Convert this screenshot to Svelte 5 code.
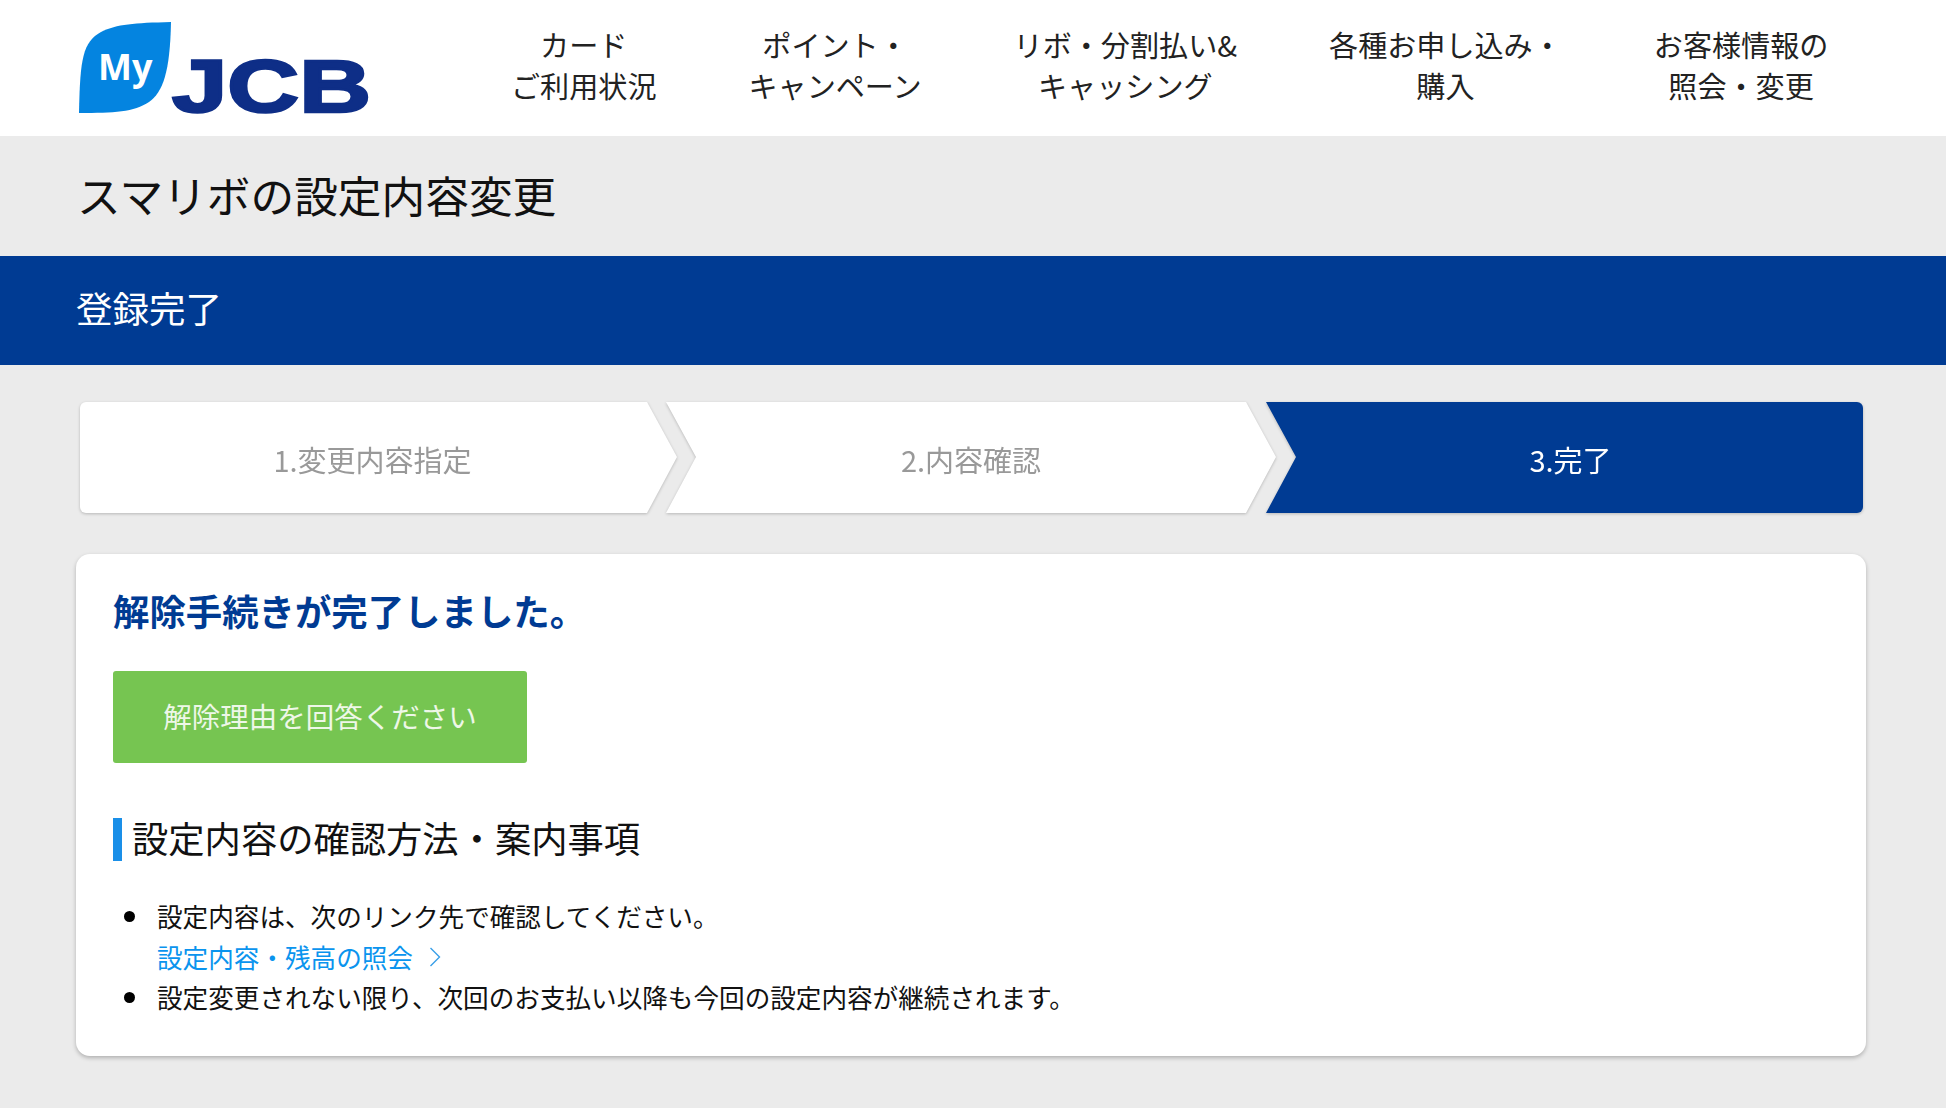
<script lang="ts">
  const navItems = [
    ["カード", "ご利用状況"],
    ["ポイント・", "キャンペーン"],
    ["リボ・分割払い&", "キャッシング"],
    ["各種お申し込み・", "購入"],
    ["お客様情報の", "照会・変更"],
  ];

  const steps = [
    { label: "1.変更内容指定", kind: "first" },
    { label: "2.内容確認", kind: "middle" },
    { label: "3.完了", kind: "last" },
  ];
</script>

<div class="page">
  <header class="header">
    <svg class="logo" width="300" height="112" viewBox="0 0 300 112" aria-label="MyJCB">
      <path
        d="M92 0 C55 1 38 2 22 10 C4 20 1 36 0 91 C35 91 55 90 70 80 C84 70 91 50 92 0 Z"
        fill="#0484e0"
      />
      <text x="19" y="58" class="logo-my">My</text>
      <text x="93" y="90" class="logo-jcb" textLength="199" lengthAdjust="spacingAndGlyphs">JCB</text>
    </svg>
    <nav class="nav">
      {#each navItems as lines}
        <a class="nav-item" href="#top">
          {#each lines as line}
            <span>{line}</span>
          {/each}
        </a>
      {/each}
    </nav>
  </header>

  <div class="title-band">
    <h1>スマリボの設定内容変更</h1>
  </div>

  <div class="status-band">登録完了</div>

  <ol class="steps">
    {#each steps as step}
      <li class="step {step.kind}">{step.label}</li>
    {/each}
  </ol>

  <main class="card">
    <h2 class="done">解除手続きが完了しました。</h2>
    <button class="survey" type="button">解除理由を回答ください</button>
    <h3 class="section">設定内容の確認方法・案内事項</h3>
    <ul class="notes">
      <li>
        <div>
          設定内容は、次のリンク先で確認してください。
          <a class="link" href="#top">
            設定内容・残高の照会
            <svg width="12" height="20" viewBox="0 0 12 20" aria-hidden="true">
              <path d="M1.5 1 L10.5 10 L1.5 19" fill="none" stroke="#3a9fe8" stroke-width="1.4" />
            </svg>
          </a>
        </div>
      </li>
      <li><div>設定変更されない限り、次回のお支払い以降も今回の設定内容が継続されます。</div></li>
    </ul>
  </main>
</div>

<style>
  :global(body) {
    margin: 0;
    background: #ebebeb;
  }

  .page {
    min-height: 1108px;
    background: #ebebeb;
    color: #000;
    font-family: "Noto Sans CJK JP", "Liberation Sans", sans-serif;
  }

  .header {
    display: flex;
    align-items: flex-start;
    height: 136px;
    padding-left: 79px;
    background: #fff;
    box-sizing: border-box;
  }

  .logo {
    flex: none;
    margin-top: 22px;
    width: 300px;
    height: 112px;
  }

  .logo-my {
    font-family: "Open Sans", "Liberation Sans", sans-serif;
    font-weight: 700;
    font-size: 36px;
    fill: #fff;
  }

  .logo-jcb {
    font-family: "Liberation Sans", sans-serif;
    font-weight: 700;
    font-size: 74px;
    fill: #0e2e87;
    stroke: #0e2e87;
    stroke-width: 2.5px;
  }

  .nav {
    display: flex;
    gap: 92px;
    margin-left: 132px;
    padding-top: 24px;
  }

  .nav-item {
    display: flex;
    flex-direction: column;
    align-items: center;
    font-size: 29.1px;
    line-height: 41px;
    color: #222;
    text-decoration: none;
    white-space: nowrap;
  }

  .title-band {
    height: 120px;
    padding-left: 77px;
    padding-bottom: 5px;
    box-sizing: border-box;
    display: flex;
    align-items: center;
  }

  h1 {
    margin: 0;
    font-size: 43.7px;
    font-weight: 400;
    color: #111;
  }

  .status-band {
    display: flex;
    align-items: center;
    box-sizing: border-box;
    height: 109px;
    padding-left: 76px;
    padding-bottom: 6px;
    background: #003b93;
    color: #fff;
    font-size: 36.5px;
  }

  .steps {
    display: flex;
    list-style: none;
    margin: 37px 0 0 80px;
    padding: 0;
    width: 1783px;
    filter: drop-shadow(0 1.5px 1.5px rgba(0, 0, 0, 0.22));
  }

  .step {
    display: flex;
    align-items: center;
    justify-content: center;
    box-sizing: border-box;
    height: 111px;
    padding-top: 2px;
    font-size: 29px;
    background: #fff;
    color: #999;
  }

  .step.first {
    width: 597px;
    padding-right: 12px;
    border-radius: 6px 0 0 6px;
    clip-path: polygon(0 0, 567px 0, 597px 55px, 567px 111px, 0 111px);
  }

  .step.middle {
    width: 610px;
    margin-left: -11px;
    clip-path: polygon(0 0, 580px 0, 610px 55px, 580px 111px, 0 111px, 30px 55px);
  }

  .step.last {
    width: 597px;
    margin-left: -10px;
    padding-left: 12px;
    background: #003b93;
    color: #fff;
    border-radius: 0 6px 6px 0;
    clip-path: polygon(0 0, 100% 0, 100% 100%, 0 100%, 30px 55px);
  }

  .card {
    margin: 41px 80px 0 76px;
    height: 502px;
    box-sizing: border-box;
    padding: 29px 37px 0;
    background: #fff;
    border-radius: 14px;
    box-shadow: 0 2px 4px rgba(0, 0, 0, 0.25);
  }

  .done {
    margin: 0;
    font-size: 36.4px;
    line-height: 54px;
    font-weight: 700;
    color: #003b93;
  }

  .survey {
    display: block;
    width: 414px;
    height: 92px;
    margin-top: 34px;
    padding: 0 0 3px;
    border: none;
    border-radius: 3px;
    background: #76c551;
    color: #eef7e8;
    font-family: inherit;
    font-size: 28.5px;
  }

  .section {
    margin: 55px 0 0;
    height: 43px;
    padding-left: 10px;
    border-left: 9px solid #1a8fe8;
    font-size: 36.3px;
    line-height: 39px;
    font-weight: 400;
    color: #111;
    white-space: nowrap;
  }

  .notes {
    list-style: none;
    margin: 35px 0 0;
    padding: 0;
    font-size: 25.6px;
    line-height: 40.6px;
    color: #111;
  }

  .notes li {
    display: flex;
  }

  .notes li::before {
    content: "";
    flex: none;
    width: 11px;
    height: 11px;
    margin: 15px 22px 0 11px;
    border-radius: 50%;
    background: #000;
  }

  .link {
    display: flex;
    align-items: center;
    gap: 16px;
    color: #0a94ee;
    text-decoration: none;
  }
</style>
